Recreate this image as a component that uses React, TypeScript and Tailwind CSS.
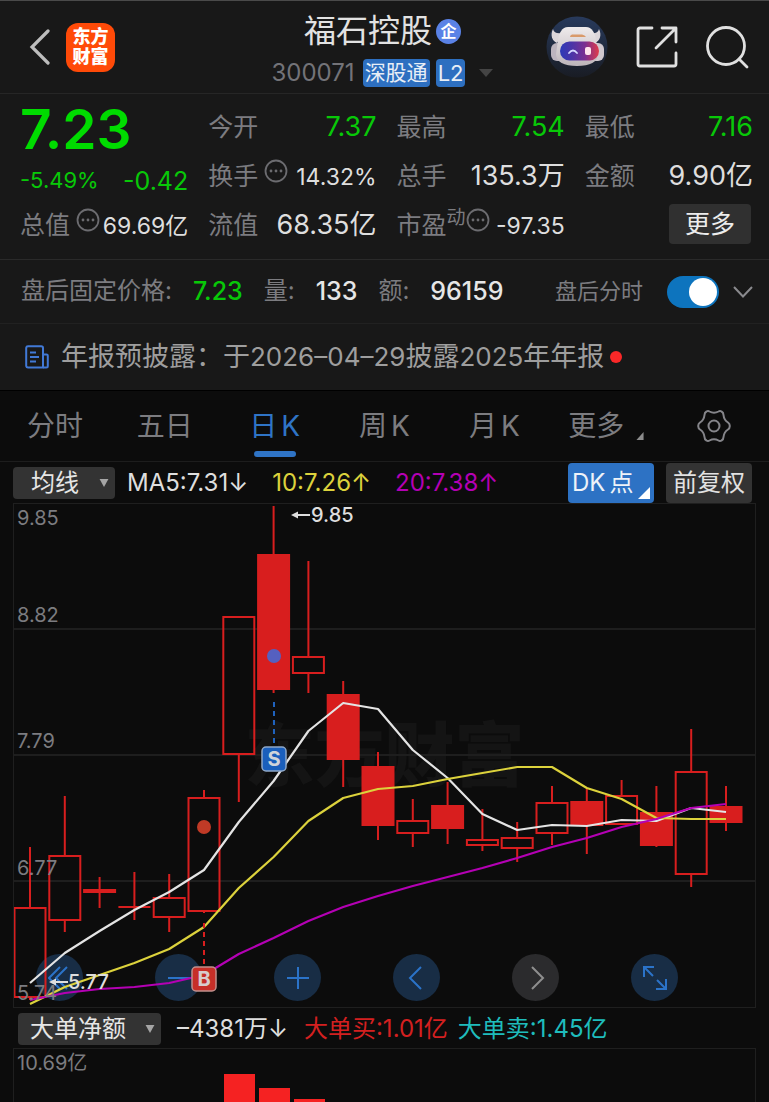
import { useState, type ReactNode } from 'react';
import clsx from 'clsx';

type Candle = { high: number; top: number; bottom: number; low: number; solid?: boolean };

// y values are in plot units, 0 is the top edge of the price pane
const candles: Candle[] = [
  { high: 343, top: 404, bottom: 493, low: 496 },
  { high: 292, top: 352, bottom: 416, low: 428 },
  { high: 373, top: 386, bottom: 388, low: 404, solid: true },
  { high: 368, top: 403, bottom: 403, low: 416 },
  { high: 370, top: 394, bottom: 413, low: 428 },
  { high: 286, top: 294, bottom: 407, low: 409 },
  { high: 113, top: 113, bottom: 250, low: 298 },
  { high: 2, top: 51, bottom: 185, low: 189, solid: true },
  { high: 57, top: 153, bottom: 169, low: 189 },
  { high: 177, top: 191, bottom: 255, low: 283, solid: true },
  { high: 248, top: 263, bottom: 321, low: 336, solid: true },
  { high: 295, top: 317, bottom: 329, low: 343 },
  { high: 278, top: 302, bottom: 324, low: 340, solid: true },
  { high: 305, top: 336, bottom: 341, low: 347 },
  { high: 318, top: 334, bottom: 344, low: 358 },
  { high: 282, top: 299, bottom: 329, low: 341 },
  { high: 285, top: 298, bottom: 321, low: 350, solid: true },
  { high: 276, top: 292, bottom: 320, low: 320 },
  { high: 282, top: 309, bottom: 341, low: 343, solid: true },
  { high: 225, top: 268, bottom: 370, low: 383 },
  { high: 282, top: 303, bottom: 318, low: 327, solid: true },
];

const ma5 = [479, 449, 427, 406, 388, 366, 318, 277, 227, 199, 205, 246, 274, 310, 326, 321, 322, 316, 317, 304, 308];
const ma10 = [500, 483, 471, 459, 445, 423, 384, 353, 317, 294, 285, 282, 275, 269, 263, 263, 284, 295, 314, 315, 315];
const ma20 = [496, 489, 485, 483, 479, 471, 450, 434, 417, 403, 392, 382, 373, 364, 354, 343, 334, 323, 315, 304, 300];

const candleX = (i: number) => 16 + i * 34.8;
const toPoints = (line: number[]) => line.map((y, i) => `${candleX(i)},${y}`).join(' ');

const tabs = [
  { name: '分时' },
  { name: '五日' },
  { name: '日', unit: 'K' },
  { name: '周', unit: 'K' },
  { name: '月', unit: 'K' },
];

const priceLabels = [
  { text: '9.85', cls: 'top-0' },
  { text: '8.82', cls: 'top-[97px]' },
  { text: '7.79', cls: 'top-[223px]' },
  { text: '6.77', cls: 'top-[350px]' },
  { text: '5.74', cls: 'bottom-0' },
];

function MoreDots() {
  return (
    <svg viewBox="0 0 24 24" className="h-6 w-6 shrink-0 -translate-y-1.5 text-[#6c6c70]" aria-hidden="true">
      <circle cx="12" cy="12" r="10.5" fill="none" stroke="currentColor" strokeWidth="1.8" />
      <circle cx="7" cy="12" r="1.4" fill="currentColor" />
      <circle cx="12" cy="12" r="1.4" fill="currentColor" />
      <circle cx="17" cy="12" r="1.4" fill="currentColor" />
    </svg>
  );
}

function Stat({ label, value, green, dots, sup }: { label: string; value: string; green?: boolean; dots?: boolean; sup?: string }) {
  return (
    <div className="flex items-center justify-between whitespace-nowrap">
      <dt className="flex items-center text-[25px] text-[#7c7c80]">
        {label}
        {sup && <sup className="top-0 -translate-y-2 text-[19px]">{sup}</sup>}
        {dots && !sup && <span className="w-1.5" />}
        {dots && <MoreDots />}
      </dt>
      <dd className={clsx(dots ? 'pt-0.5 text-[23px]' : 'text-[27px]', green ? 'text-[#08c808]' : 'text-[#dedede]')}>{value}</dd>
    </div>
  );
}

function Picker({ label, options, className }: { label: string; options: string[]; className: string }) {
  return (
    <div className="relative shrink-0">
      <select
        aria-label={label}
        className={clsx('h-8 appearance-none rounded-sm bg-[#333333] text-2xl leading-8 text-[#e6e6e6] outline-none', className)}
      >
        {options.map((o) => (
          <option key={o}>{o}</option>
        ))}
      </select>
      <svg viewBox="0 0 10 9" className="pointer-events-none absolute top-3 right-1.5 h-2 w-2.5" aria-hidden="true">
        <path d="M0 0h10L5 9z" fill="#a5a5a5" />
      </svg>
    </div>
  );
}

function Robot() {
  return (
    <svg viewBox="0 0 62 62" className="h-[62px] w-[62px]" aria-hidden="true">
      <defs>
        <linearGradient id="visor" x1="0" x2="1">
          <stop offset="0" stopColor="#2c3ab8" />
          <stop offset="0.3" stopColor="#4a34a8" />
          <stop offset="0.65" stopColor="#7c3090" />
          <stop offset="1" stopColor="#e03a4a" />
        </linearGradient>
        <linearGradient id="shell" x1="0" y1="0" x2="0" y2="1">
          <stop offset="0" stopColor="#efebec" />
          <stop offset="1" stopColor="#bdb5ba" />
        </linearGradient>
        <linearGradient id="halo" x1="0" y1="0" x2="0" y2="1">
          <stop offset="0" stopColor="#283a5c" />
          <stop offset="1" stopColor="#191c24" />
        </linearGradient>
      </defs>
      <circle cx="31" cy="31" r="30.5" fill="url(#halo)" />
      <path d="M7 13c-3 6-1 12 4 14l6-10c-6 1-9 0-10-4zM53 13c3 6 1 12-4 14l-6-10c6 1 9 0 10-4z" fill="#dcd6da" />
      <rect x="5" y="27" width="14" height="18" rx="6" fill="#bcb4be" />
      <rect x="43" y="27" width="15" height="18" rx="6" fill="#d0c8ce" />
      <path d="M22 11h18c6 0 9 6 10 13l2 14c0 8-8 12-21 12s-21-4-21-12l2-14c1-7 4-13 10-13z" fill="url(#shell)" />
      <path d="M26 18.500h10q3 .5 4 2.500H24q0-2 2-2.500z" fill="#d99a6a" />
      <rect x="14" y="25.500" width="39" height="19" rx="9.5" fill="url(#visor)" />
      <path d="M23 37q4-5 8 0" fill="none" stroke="#d5d8ff" strokeWidth="1.8" strokeLinecap="round" />
      <rect x="39" y="31" width="6" height="8" rx="2" fill="#ffe4ec" />
    </svg>
  );
}

function Header() {
  return (
    <header className="grid grid-cols-[1fr_auto_1fr] items-center border-t border-b border-t-[#4a4a4a] border-b-[#262626] pt-1.5 pr-5 pb-1.5 pl-4">
      <div className="flex items-center gap-4 pl-3">
        <button type="button" aria-label="返回">
          <svg viewBox="0 0 22 36" className="h-9 w-[22px]" fill="none" stroke="#bdbdbd" strokeWidth="3.2">
            <path d="M20 2L4 18l16 16" strokeLinecap="round" />
          </svg>
        </button>
        <div className="flex h-[49px] w-[49px] flex-col items-center justify-center rounded-xl bg-[#ff4a08] text-lg leading-5 font-black text-white">
          <span>东方</span>
          <span>财富</span>
        </div>
      </div>
      <div className="flex flex-col items-center gap-1">
        <h1 className="flex items-center gap-1 text-[32px] leading-[48px] text-[#e2e2e2]">
          福石控股
          <span className="flex h-[25px] w-[25px] items-center justify-center rounded-full bg-[#5a82e6] text-base leading-none font-bold text-white">企</span>
        </h1>
        <div className="flex items-center text-[22px] leading-7">
          <span className="mr-2 text-2xl leading-7 text-[#737378]">300071</span>
          <span className="mr-1.5 rounded-sm bg-[#2d6fc0] px-0.5 text-[21px] text-[#e8eef6]">深股通</span>
          <span className="rounded-sm bg-[#2d6fc0] px-0.5 text-[#e8eef6]">L2</span>
          <svg viewBox="0 0 14 8" className="ml-3.5 h-2 w-3.5" aria-hidden="true">
            <path d="M0 0h14L7 8z" fill="#444" />
          </svg>
        </div>
      </div>
      <div className="flex items-center justify-end gap-7">
        <button type="button" aria-label="智能助手">
          <Robot />
        </button>
        <button type="button" aria-label="分享">
          <svg viewBox="0 0 42 42" className="h-[42px] w-[42px]" fill="none" stroke="#e0e0e0" strokeWidth="2.8" strokeLinecap="round" strokeLinejoin="round">
            <path d="M16 2H4a2 2 0 0 0-2 2v34a2 2 0 0 0 2 2h34a2 2 0 0 0 2-2V27" />
            <path d="M26 2h14v14M39 3L20 22" />
          </svg>
        </button>
        <button type="button" aria-label="搜索">
          <svg viewBox="0 0 43 43" className="h-[43px] w-[43px]" fill="none" stroke="#e0e0e0" strokeWidth="2.8" strokeLinecap="round">
            <circle cx="20" cy="20" r="18.5" />
            <path d="M33 33l8 8" />
          </svg>
        </button>
      </div>
    </header>
  );
}

function Quote() {
  return (
    <section className="border-b border-[#2a2a2a] pt-[9px] pr-4 pb-[9px] pl-5">
      <dl className="grid auto-rows-[49px] grid-cols-4 gap-x-5">
        <div className="flex items-center pt-1">
          <dd className="text-[55px] leading-none font-semibold text-[#00dc00]">7.23</dd>
        </div>
        <Stat label="今开" value="7.37" green />
        <Stat label="最高" value="7.54" green />
        <Stat label="最低" value="7.16" green />
        <div className="flex items-center justify-between pt-2 text-[#08c808]">
          <dd className="text-[22px]">-5.49%</dd>
          <dd className="pt-0.5 text-[25px]">-0.42</dd>
        </div>
        <Stat label="换手" value="14.32%" dots />
        <Stat label="总手" value="135.3万" />
        <Stat label="金额" value="9.90亿" />
        <Stat label="总值" value="69.69亿" dots />
        <Stat label="流值" value="68.35亿" />
        <Stat label="市盈" value="-97.35" sup="动" dots />
        <div className="flex items-center justify-end pr-0.5">
          <button type="button" className="mb-1 h-10 rounded-sm bg-[#303030] px-4 text-[25px] leading-10 text-[#ececec]">更多</button>
        </div>
      </dl>
    </section>
  );
}

function AfterHours() {
  const [on, setOn] = useState(true);
  return (
    <section className="flex h-16 items-center border-b border-[#212121] pr-4 pl-[21px] text-2xl whitespace-nowrap text-[#7c7c80]">
      <dl className="flex items-center gap-[21px] [&>dd]:text-[25px] [&>dd]:font-medium">
        <dt>盘后固定价格:</dt>
        <dd className="text-[#08c808]">7.23</dd>
        <dt>量:</dt>
        <dd className="text-[#e6e6e6]">133</dd>
        <dt>额:</dt>
        <dd className="text-[#e6e6e6]">96159</dd>
      </dl>
      <label className="ml-auto flex items-center gap-6 text-[22px]">
        盘后分时
        <input type="checkbox" role="switch" className="peer sr-only" checked={on} onChange={(e) => setOn(e.target.checked)} />
        <span className="flex h-8 w-[52px] items-center rounded-full bg-[#444] px-0.5 peer-checked:justify-end peer-checked:bg-[#0d74be]">
          <span className="h-7 w-7 rounded-full bg-white" />
        </span>
      </label>
      <button type="button" aria-label="展开" className="ml-3.5">
        <svg viewBox="0 0 20 12" className="h-3 w-5" fill="none" stroke="#8a8a8e" strokeWidth="2">
          <path d="M1 1l9 9.5L19 1" />
        </svg>
      </button>
    </section>
  );
}

function Notice() {
  return (
    <a href="#report" className="flex h-[67px] items-center border-b border-black pl-[25px] text-[27px] whitespace-nowrap text-[#9e9e9e]">
      <svg viewBox="0 0 24 24" className="mr-3 h-6 w-6 shrink-0" fill="none" stroke="#4179d6" strokeWidth="2" strokeLinejoin="round" aria-hidden="true">
        <path d="M18 22.5H3A1.8 1.8 0 0 1 1.2 21V2.8A1.8 1.8 0 0 1 3 1.2h13.2A1.8 1.8 0 0 1 18 3z" />
        <path d="M18 9.5h3.5a1.3 1.3 0 0 1 1.3 1.3V21a1.5 1.5 0 0 1-1.5 1.5H18" />
        <path d="M5 7.5h6M5 12h9M5 16.5h6" />
      </svg>
      <span>
        年报预披露：于<span className="text-[26px]">2026–04–29</span>披露<span className="text-[26px]">2025</span>年年报
      </span>
      <span className="ml-1.5 h-3 w-3 rounded-full bg-[#fa2828]" />
    </a>
  );
}

function PeriodTabs() {
  const [active, setActive] = useState('日');
  return (
    <nav className="grid h-[71px] grid-cols-7 border-b border-[#1d1d1d] text-[28px] text-[#7c7c80]">
      {tabs.map(({ name, unit }) => (
        <button
          key={name}
          type="button"
          onClick={() => setActive(name)}
          className={clsx('relative flex items-center justify-center gap-1 whitespace-nowrap', active === name && 'text-[#2f74c6]')}
        >
          <span>{name}</span>
          {unit && <span>{unit}</span>}
          {active === name && <span className="absolute inset-x-[34px] bottom-1 h-1.5 rounded-full bg-[#2f74c6]" />}
        </button>
      ))}
      <button type="button" className="flex items-center justify-center gap-3 pl-1">
        更多
        <svg viewBox="0 0 8 9" className="mt-5 h-2 w-2" aria-hidden="true">
          <path d="M8 0v9H0z" fill="#8c8c8c" />
        </svg>
      </button>
      <button type="button" aria-label="设置" className="flex items-center justify-center">
        <svg viewBox="0 0 34 34" className="h-[34px] w-[34px]" fill="none" stroke="#85858a" strokeWidth="2" strokeLinejoin="round">
          <path d="M9.5 2.5Q11 1.5 12.5 2.5Q17 5 21.5 2.5Q23 1.5 24.5 2.5Q26.5 3.5 26.5 6Q27 11 31 13.5Q33 15 32.7 17Q33 19 31 20.5Q27 23 26.5 28Q26.5 30.5 24.5 31.5Q23 32.5 21.5 31.5Q17 29 12.5 31.5Q11 32.5 9.5 31.5Q7.5 30.5 7.5 28Q7 23 3 20.5Q1 19 1.3 17Q1 15 3 13.5Q7 11 7.5 6Q7.5 3.5 9.5 2.5z" />
          <circle cx="17" cy="17" r="5.5" />
        </svg>
      </button>
    </nav>
  );
}

function AverageBar() {
  return (
    <div className="flex h-[41px] items-center px-[13px] text-2xl whitespace-nowrap">
      <Picker label="主图指标" options={['均线']} className="w-[102px] pl-[18px]" />
      <span className="ml-3 text-[#dedede]">MA5:7.31↓</span>
      <span className="ml-6 text-[#dcd23c]">10:7.26↑</span>
      <span className="ml-6 text-[#b400b4]">20:7.38↑</span>
      <div className="mr-1 ml-auto flex gap-3">
        <button type="button" className="relative flex h-10 w-[86px] items-center gap-1 rounded-sm bg-[#2d72c4] pl-1 text-[#eef2f8]">
          <span>DK</span>
          <span>点</span>
          <svg viewBox="0 0 12 12" className="absolute right-1 bottom-1 h-3 w-3" aria-hidden="true">
            <path d="M12 0v12H0z" fill="#fff" />
          </svg>
        </button>
        <button type="button" className="h-10 w-[86px] rounded-sm bg-[#333333] text-[#e2e2e2]">前复权</button>
      </div>
    </div>
  );
}

function RoundButton({ label, muted, children }: { label: string; muted?: boolean; children: ReactNode }) {
  return (
    <button
      type="button"
      aria-label={label}
      className={clsx('flex h-[47px] w-[47px] items-center justify-center rounded-full', muted ? 'bg-[#2b2b2d]' : 'bg-[#182d45]')}
    >
      <svg viewBox="0 0 24 24" className="h-6 w-6" fill="none" stroke={muted ? '#8e8e8e' : '#2b73c8'} strokeWidth="2">
        {children}
      </svg>
    </button>
  );
}

function PriceChart() {
  return (
    <div className="relative mx-[13px] border border-[#1f1f1f]">
      <div aria-hidden="true" className="absolute inset-0 flex items-center justify-center text-[70px] font-black text-[#141414]">
        东方财富
      </div>
      <div className="absolute bottom-1.5 left-[22px] flex w-[642px] max-w-full justify-between">
        <RoundButton label="最早">
          <path d="M12 1L1 12l11 11M19 1L8 12l11 11" />
        </RoundButton>
        <RoundButton label="缩小">
          <path d="M1 12h22" />
        </RoundButton>
        <RoundButton label="放大">
          <path d="M1 12h22M12 1v22" />
        </RoundButton>
        <RoundButton label="左移">
          <path d="M16 1L5 12l11 11" />
        </RoundButton>
        <RoundButton label="右移" muted>
          <path d="M8 1l11 11L8 23" />
        </RoundButton>
        <RoundButton label="全屏">
          <path d="M1 11V1h10M1 1l9 9M23 13v10H13M23 23l-9-9" />
        </RoundButton>
      </div>
      <svg viewBox="0 0 741 503" className="pointer-events-none relative block w-full" role="img" aria-label="日K线图">
        <g stroke="#1e1e1e" strokeWidth="2">
          <path d="M0 125h741M0 251h741M0 377h741" />
        </g>
        <g stroke="#d81e1e" strokeWidth="2">
          {candles.map((c, i) => {
            const x = candleX(i);
            return (
              <g key={i}>
                <path d={`M${x} ${c.high}V${c.top}M${x} ${c.bottom}V${c.low}`} />
                <rect x={x - 15.5} y={c.top} width={31} height={c.bottom - c.top} fill={c.solid ? '#d81e1e' : 'none'} />
                {c.top === c.bottom && <path d={`M${x - 16} ${c.top}h32`} />}
              </g>
            );
          })}
        </g>
        <circle cx="190" cy="323" r="7" fill="#c03a26" />
        <circle cx="260" cy="152" r="7" fill="#5560c0" />
        <g fill="none" strokeWidth="2.2" strokeLinejoin="round">
          <polyline points={toPoints(ma5)} stroke="#e4e4e4" />
          <polyline points={toPoints(ma10)} stroke="#dcd23c" />
          <polyline points={toPoints(ma20)} stroke="#b400b4" />
        </g>
        {/* sell / buy markers */}
        <path d="M260 198v43" stroke="#1f62bd" strokeWidth="2" strokeDasharray="5 4" />
        <path d="M190 419v43" stroke="#d81e1e" strokeWidth="2" strokeDasharray="5 4" />
        <g strokeWidth="1.5" fontSize="20" fontWeight="700" textAnchor="middle">
          <rect x="248" y="243" width="24" height="24" rx="4" fill="#1a5fbc" stroke="#8fa8c8" />
          <text x="260" y="262" fill="#d0d4da">S</text>
          <rect x="178" y="463" width="24" height="24" rx="4" fill="#c62f28" stroke="#c0908c" />
          <text x="190" y="482" fill="#d8cccc">B</text>
        </g>
        <g fill="#dedede" stroke="#dedede" fontSize="20" fontWeight="500">
          <path d="M284 11h12" strokeWidth="2" />
          <path d="M277 11l7-3.500v7z" stroke="none" />
          <text x="297" y="18" stroke="none">9.85</text>
          <path d="M41 478h13" strokeWidth="2" />
          <path d="M35 478l7-3.5v7z" stroke="none" />
          <text x="54" y="485" stroke="none">5.77</text>
        </g>
      </svg>
      {priceLabels.map((p) => (
        <span key={p.text} className={clsx('absolute left-[3px] text-xl leading-7 text-[#7c7c80]', p.cls)}>
          {p.text}
        </span>
      ))}
    </div>
  );
}

function OrderFlow() {
  return (
    <section>
      <div className="flex h-10 items-center pt-0.5 pl-[18px] text-2xl whitespace-nowrap">
        <Picker label="副图指标" options={['大单净额']} className="w-[143px] pl-3" />
        <span className="ml-4 text-[#dedede]">–4381万↓</span>
        <span className="ml-4 text-[#d42020]">大单买:1.01亿</span>
        <span className="ml-2.5 text-[#1fbcbc]">大单卖:1.45亿</span>
      </div>
      <div className="relative mx-[13px] border border-b-0 border-[#1f1f1f]">
        <span className="absolute left-[3px] text-xl leading-7 text-[#7c7c80]">10.69亿</span>
        <svg viewBox="0 0 741 53" className="block w-full" role="img" aria-label="大单净额柱状图">
          <g fill="#f52222">
            <rect x="210" y="25" width="31" height="28" />
            <rect x="245" y="39" width="31" height="14" />
            <rect x="280" y="50" width="31" height="3" />
          </g>
        </svg>
      </div>
    </section>
  );
}

export default function App() {
  return (
    <div className="min-h-screen bg-[#0c0c0c] font-['Inter','Noto_Sans_CJK_SC',sans-serif]">
      <div className="bg-[#181818]">
        <Header />
        <Quote />
        <AfterHours />
        <Notice />
      </div>
      <PeriodTabs />
      <AverageBar />
      <PriceChart />
      <OrderFlow />
    </div>
  );
}
